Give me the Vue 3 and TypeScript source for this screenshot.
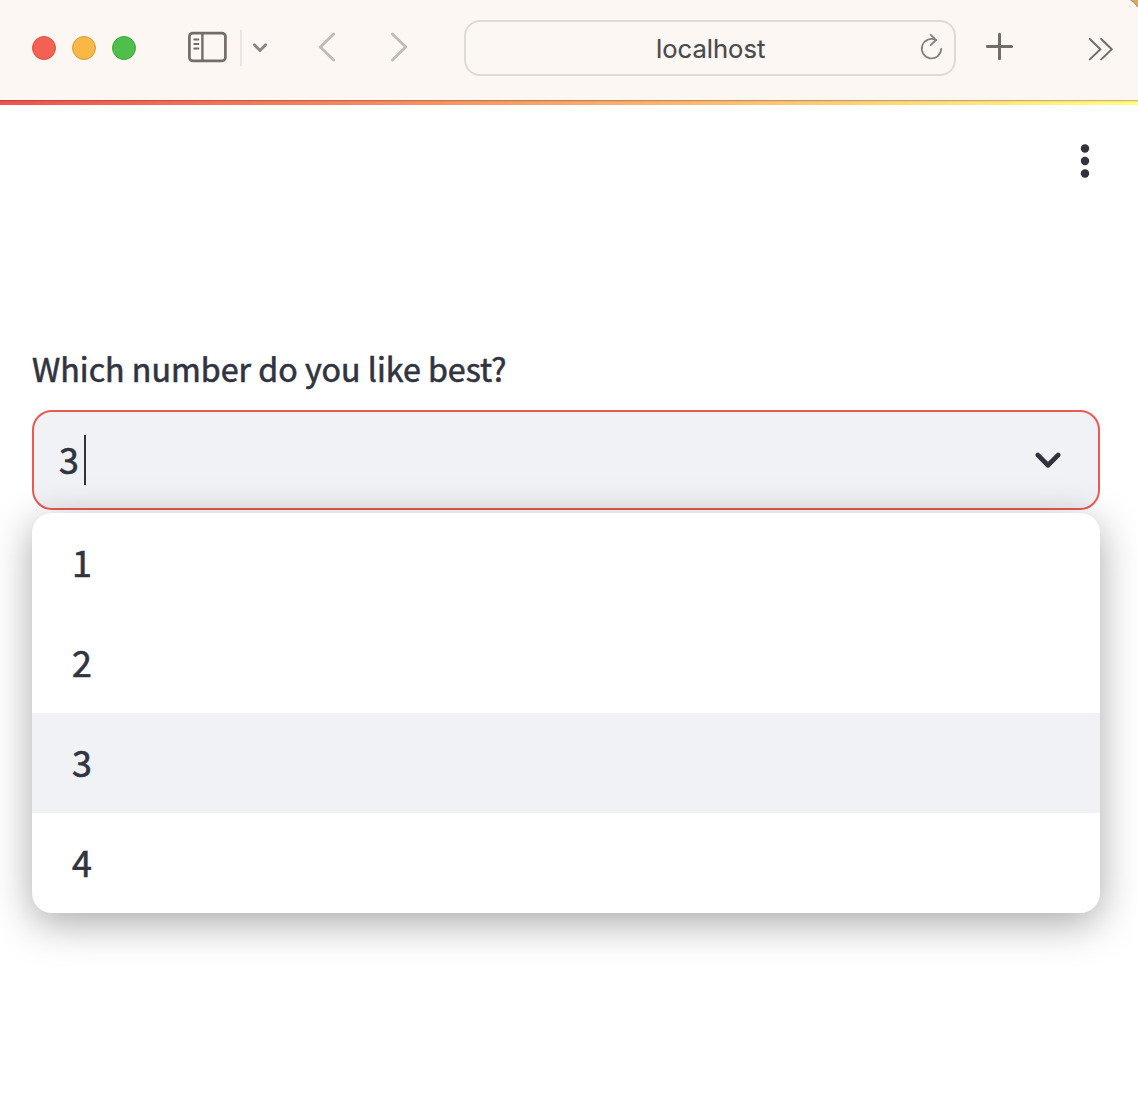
<script setup lang="ts">
import { ref } from 'vue'

const options = ['1', '2', '3', '4']
const selected = ref('3')
</script>

<template>
  <div class="window">
    <header class="toolbar">
      <div class="lights">
        <span class="light red"></span>
        <span class="light amber"></span>
        <span class="light green"></span>
      </div>
      <svg class="sidebar" width="40" height="32" viewBox="0 0 40 32" fill="none" stroke="#736c68">
        <rect x="2.4" y="2.2" width="36" height="27.6" rx="3.4" stroke-width="2.7" />
        <path d="M15.4 2v28" stroke-width="2.4" />
        <path d="M7.2 8.5h4.2M7.2 13h4.2M7.2 17.5h4.2" stroke-width="1.8" stroke-linecap="round" />
      </svg>
      <span class="divider"></span>
      <svg class="small-chevron" width="16" height="12" viewBox="0 0 16 12" fill="none" stroke="#8a8684" stroke-width="2.9" stroke-linecap="round" stroke-linejoin="round">
        <path d="M2.4 2.7 8 8.6l5.6-5.9" />
      </svg>
      <svg class="back" width="18" height="30" viewBox="0 0 18 30" fill="none" stroke="#c0bbb7" stroke-width="2.9" stroke-linecap="round" stroke-linejoin="round">
        <path d="M15.7 2 2.3 15l13.4 13" />
      </svg>
      <svg class="forward" width="18" height="30" viewBox="0 0 18 30" fill="none" stroke="#c0bbb7" stroke-width="2.9" stroke-linecap="round" stroke-linejoin="round">
        <path d="M2.4 2l13.4 13L2.4 28" />
      </svg>
      <div class="address">
        <span class="host">localhost</span>
        <svg class="reload" width="24" height="28" viewBox="0 0 24 28" fill="none" stroke="#85817e" stroke-width="1.8" stroke-linecap="round" stroke-linejoin="round">
          <path d="M22.2 16.8A9.7 9.7 0 1 1 16.8 8" />
          <path d="M11.8 2.8l5.2 5.2-5.2 5" />
        </svg>
      </div>
      <svg class="plus" width="28" height="28" viewBox="0 0 28 28" fill="none" stroke="#736c68" stroke-width="3" stroke-linecap="round">
        <path d="M13.5 2.3v24.4M1.4 14.5h24.2" />
      </svg>
      <svg class="more" width="26" height="24" viewBox="0 0 26 24" fill="none" stroke="#736c68" stroke-width="2" stroke-linecap="round" stroke-linejoin="round">
        <path d="M1.8 2 12.4 12.2 1.8 22.4M13.2 2 23.8 12.2 13.2 22.4" />
      </svg>
      <svg class="corner" width="8" height="8" viewBox="0 0 8 8">
        <path d="M.5 0Q4.5 2 7 7h1V0z" fill="#e3a750" />
        <path d="M.5 0Q4.5 2 7.6 7" fill="none" stroke="#a98a60" />
      </svg>
    </header>
    <div class="rainbow"></div>
    <main class="page">
      <svg class="kebab" width="10" height="36" viewBox="0 0 10 36" fill="#31333f">
        <circle cx="5" cy="5.5" r="4.2" />
        <circle cx="5" cy="18" r="4.2" />
        <circle cx="5" cy="30.5" r="4.2" />
      </svg>
      <label class="label">Which number do you like best?</label>
      <div class="select">
        <span class="value">{{ selected }}</span>
        <span class="caret"></span>
        <svg class="chevron" width="26" height="17" viewBox="0 0 26 17" fill="none" stroke="#31333f" stroke-width="4.8" stroke-linecap="round" stroke-linejoin="round">
          <path d="M2.9 3.1 13 13.2 23.1 3.1" />
        </svg>
      </div>
      <ul class="menu">
        <li v-for="option in options" :key="option" class="option" :class="{ active: option === selected }">
          {{ option }}
        </li>
      </ul>
    </main>
  </div>
</template>

<style>
body {
  background: #fff;
}
</style>

<style scoped>
.window {
  box-sizing: border-box;
  width: 1138px;
  height: 1116px;
  overflow: hidden;
  color: #31333f;
}
.toolbar {
  position: relative;
  display: flex;
  align-items: flex-start;
  box-sizing: border-box;
  height: 100px;
  background: #fcf7f3;
}
.toolbar > * {
  flex: none;
}
.lights {
  display: flex;
  gap: 16px;
  margin: 36px 0 0 32px;
}
.light {
  box-sizing: border-box;
  width: 24px;
  height: 24px;
  border-radius: 50%;
}
.red {
  background: #f36153;
  border: 1px solid #d95347;
}
.amber {
  background: #f9b745;
  border: 1px solid #d99a3b;
}
.green {
  background: #4fbf4b;
  border: 1px solid #43a63e;
}
.sidebar {
  margin: 31px 0 0 51px;
}
.divider {
  width: 2px;
  height: 36px;
  margin: 30px 0 0 13px;
  background: #eae5e2;
}
.small-chevron {
  margin: 42px 0 0 10px;
}
.back {
  margin: 32px 0 0 50px;
}
.forward {
  margin: 32px 0 0 54px;
}
.address {
  display: flex;
  align-items: center;
  justify-content: flex-end;
  box-sizing: border-box;
  width: 492px;
  height: 56px;
  margin: 20px 0 0 56px;
  padding-right: 11px;
  border: 2px solid #dedad6;
  border-radius: 16px;
}
.host {
  width: 109px;
  margin: 2px 154px 0 0;
  font: 25.6px/32px Inter, "Liberation Sans", sans-serif;
  color: #4c4a49;
  white-space: nowrap;
  -webkit-text-stroke: 0.2px #4c4a49;
}
.reload {
  margin-top: -4px;
}
.plus {
  margin: 32px 0 0 30px;
}
.more {
  margin: 37px 0 0 74px;
}
.corner {
  position: absolute;
  top: 0;
  right: 0;
}
.rainbow {
  height: 5px;
  background:
    linear-gradient(rgba(110, 30, 0, 0.3) 0 1px, rgba(110, 30, 0, 0.08) 1px 2px, transparent 2px),
    linear-gradient(90deg, #ee5350, #fffd8a);
}
.page {
  display: flex;
  flex-direction: column;
  padding: 38px 38px 0 32px;
  font-family: "Noto Sans CJK SC", "Noto Sans", sans-serif;
  -webkit-text-stroke: 0.6px #31333f;
}
.kebab {
  align-self: flex-end;
  margin-right: 10px;
}
.label {
  margin-top: 164px;
  font-size: 32.2px;
  line-height: 50px;
}
.select {
  display: flex;
  align-items: center;
  box-sizing: border-box;
  height: 100px;
  margin-top: 17px;
  padding: 0 37px 0 25px;
  border: 2px solid #ec5953;
  border-radius: 20px;
  background: #f0f2f6;
  font-size: 35.8px;
}
.value {
  margin-bottom: 4px;
  line-height: 50px;
}
.caret {
  width: 2px;
  height: 50px;
  margin-left: 5px;
  background: #31333f;
}
.chevron {
  margin-left: auto;
}
.menu {
  position: relative;
  margin: 3px 0 0;
  padding: 0;
  overflow: hidden;
  border-radius: 20px;
  background: #fff;
  box-shadow: 0 10px 40px rgba(0, 0, 0, 0.34);
  list-style: none;
}
.option {
  box-sizing: border-box;
  height: 100px;
  padding-left: 40px;
  font-size: 35.8px;
  line-height: 96px;
}
.active {
  background: #f0f2f6;
}
</style>
